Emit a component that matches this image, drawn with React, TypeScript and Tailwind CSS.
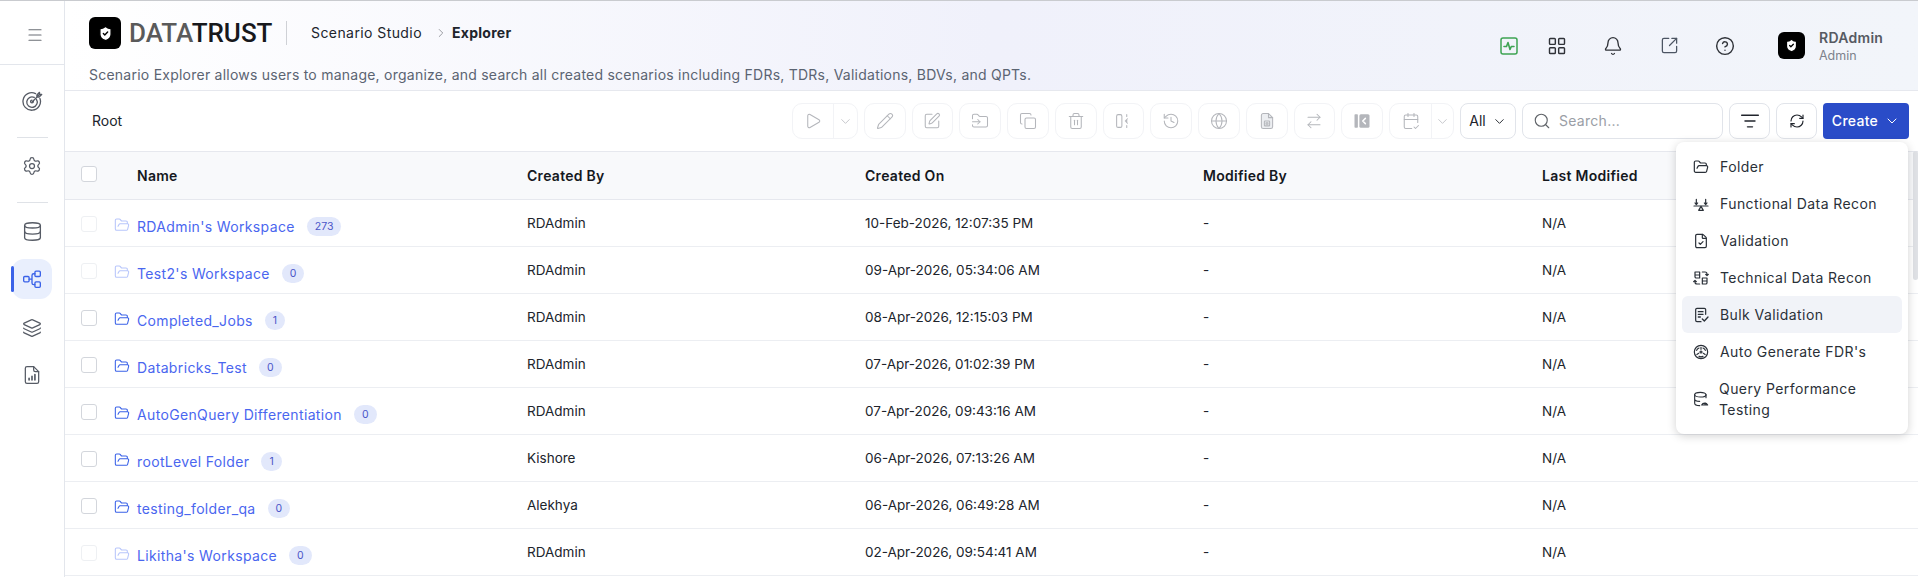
import type { ReactNode } from "react";
import {
  ArrowRightLeft,
  Bell,
  CalendarCheck2,
  ChevronDown,
  ChevronRight,
  CircleHelp,
  Copy,
  Database,
  FileCheck,
  FolderInput,
  FolderOpen,
  Globe,
  History,
  Layers,
  LayoutGrid,
  ListFilter,
  Menu,
  Pencil,
  Play,
  RefreshCw,
  Search,
  Settings,
  ShieldCheck,
  SquarePen,
  SquareArrowOutUpRight,
  Trash2,
} from "lucide-react";

type IconProps = { size?: number; strokeWidth?: number; className?: string };

const Svg = ({ size = 24, strokeWidth = 1.5, className, children }: IconProps & { children: ReactNode }) => (
  <svg
    width={size}
    height={size}
    viewBox="0 0 24 24"
    fill="none"
    stroke="currentColor"
    strokeWidth={strokeWidth}
    strokeLinecap="round"
    strokeLinejoin="round"
    className={className}
  >
    {children}
  </svg>
);

const TargetIcon = (p: IconProps) => (
  <Svg {...p}>
    <path d="M20.5 8.5A10 10 0 1 1 15.5 3" />
    <path d="M16.5 9.5a6 6 0 1 1-2.5-2.2" />
    <path d="M13 12a1.6 1.6 0 1 1-1.6-1.6" />
    <path d="M11.5 12.5 20 4M17 4.5V7h2.5L22.5 4H20V1.5z" />
  </Svg>
);

const TreeIcon = (p: IconProps) => (
  <Svg {...p}>
    <rect x="2" y="9" width="6.5" height="6.5" rx="1.3" />
    <rect x="15.5" y="2.5" width="6.5" height="6.5" rx="1.3" />
    <rect x="15.5" y="15.5" width="6.5" height="6.5" rx="1.3" />
    <path d="M8.5 12.2H12M15.5 5.7h-1.5a2 2 0 0 0-2 2v9a2 2 0 0 0 2 2h1.5" />
  </Svg>
);

const ReportIcon = (p: IconProps) => (
  <Svg {...p}>
    <path d="M14 2H6a2 2 0 0 0-2 2v16a2 2 0 0 0 2 2h12a2 2 0 0 0 2-2V8z" />
    <path d="M14 2v4a2 2 0 0 0 2 2h4" />
    <path d="M8.5 18v-2M12 18v-4.5M15.5 18v-6.5" strokeWidth={2} />
  </Svg>
);

const PulseBox = () => (
  <svg width="18" height="18" viewBox="0 0 18 18" fill="none" stroke="#3ea453" strokeLinejoin="round">
    <rect x="1" y="1" width="16" height="16" rx="2" strokeWidth="1.5" />
    <path d="M4 9.5h2.5L8 5.5l2 7 1.3-3H14" strokeWidth="1.6" strokeLinecap="round" />
  </svg>
);

const SplitIcon = (p: IconProps) => (
  <Svg {...p}>
    <rect x="3.5" y="3.5" width="7" height="17" rx="2" />
    <path d="M17 3.5V6M17 10v4M17 18v2.5M18 9l-3 3 3 3" />
  </Svg>
);

const FileSaveIcon = (p: IconProps) => (
  <Svg {...p}>
    <path d="M14 2H7a2.5 2.5 0 0 0-2.5 2.5v15A2.5 2.5 0 0 0 7 22h10a2.5 2.5 0 0 0 2.5-2.5V7.5z" fill="#eceef1" />
    <path d="M14 2v5.5h5.5" />
    <rect x="8.5" y="12" width="7" height="6.5" rx="1" />
    <rect x="10.7" y="14.2" width="2.6" height="2.2" />
  </Svg>
);

const PanelIcon = ({ size = 24, className }: IconProps) => (
  <svg width={size} height={size} viewBox="0 0 24 24" className={className}>
    <rect x="2" y="3" width="4.5" height="18" rx="1" fill="currentColor" />
    <rect x="8.5" y="3" width="13.5" height="18" rx="2" fill="currentColor" />
    <path d="m16.5 8.5-3.500 3.500 3.500 3.500" fill="none" stroke="white" strokeWidth="2" strokeLinecap="round" strokeLinejoin="round" />
  </svg>
);

const BalanceIcon = (p: IconProps) => (
  <Svg {...p}>
    <path d="M1.5 15h21" />
    <path d="M5 5v8M3 10.5 5 13l2-2.500M19 5v8M17 10.5l2 2.500 2-2.500" />
    <path d="M12 15.5 8.5 21.5h7z" />
  </Svg>
);

const TechIcon = (p: IconProps) => (
  <Svg {...p}>
    <path d="M3 3h7v9H5a2 2 0 0 1-2-2zM3 7.5h7" />
    <path d="M14 12h7v7a2 2 0 0 1-2 2h-5zM14 16.5h7" />
    <path d="M14 3h4a3 3 0 0 1 3 3v2M19 6.5l2 2 2-2M10 21H6a3 3 0 0 1-3-3v-2M5 17.5l-2-2-2 2" />
  </Svg>
);

const BulkIcon = (p: IconProps) => (
  <Svg {...p}>
    <path d="M19 11V4a2 2 0 0 0-2-2H6a2 2 0 0 0-2 2v16a2 2 0 0 0 2 2h6" />
    <path d="M8 7h7M8 11h7M8 15h3" strokeWidth={2} />
    <path d="m14 18 3 3 5.500-6" strokeWidth={2} />
  </Svg>
);

const AutoIcon = (p: IconProps) => (
  <Svg {...p}>
    <circle cx="12" cy="12" r="10" />
    <circle cx="12" cy="12" r="1.5" />
    <path d="M12 8V5M8.500 14l-2.700 1.600M15.500 14l2.700 1.600" />
    <path d="M5.500 9.500a7 7 0 0 1 3.500-3.500M18.500 9.500a7 7 0 0 0-3.500-3.500M9 18.500a7 7 0 0 0 6 0" />
  </Svg>
);

const QueryIcon = (p: IconProps) => (
  <Svg {...p}>
    <ellipse cx="11" cy="5.5" rx="8.500" ry="3.500" />
    <path d="M2.500 5.500v13c0 1.900 3.400 3.500 7.500 3.500M19.500 5.500V10M2.500 12c0 1.900 3.400 3.500 7.500 3.500" />
    <path d="M13 21a5 5 0 0 1 9 0zM17.500 21l1.500-3" />
  </Svg>
);

const rows = [
  { name: "RDAdmin's Workspace", count: 273, by: "RDAdmin", on: "10-Feb-2026, 12:07:35 PM", muted: true },
  { name: "Test2's Workspace", count: 0, by: "RDAdmin", on: "09-Apr-2026, 05:34:06 AM", muted: true },
  { name: "Completed_Jobs", count: 1, by: "RDAdmin", on: "08-Apr-2026, 12:15:03 PM" },
  { name: "Databricks_Test", count: 0, by: "RDAdmin", on: "07-Apr-2026, 01:02:39 PM" },
  { name: "AutoGenQuery Differentiation", count: 0, by: "RDAdmin", on: "07-Apr-2026, 09:43:16 AM" },
  { name: "rootLevel Folder", count: 1, by: "Kishore", on: "06-Apr-2026, 07:13:26 AM" },
  { name: "testing_folder_qa", count: 0, by: "Alekhya", on: "06-Apr-2026, 06:49:28 AM" },
  { name: "Likitha's Workspace", count: 0, by: "RDAdmin", on: "02-Apr-2026, 09:54:41 AM", muted: true },
];

const menuItems = [
  { label: "Folder", Icon: FolderOpen },
  { label: "Functional Data Recon", Icon: BalanceIcon },
  { label: "Validation", Icon: FileCheck },
  { label: "Technical Data Recon", Icon: TechIcon },
  { label: "Bulk Validation", Icon: BulkIcon, active: true },
  { label: "Auto Generate FDR's", Icon: AutoIcon },
];

const toolIcons = [Pencil, SquarePen, FolderInput, Copy, Trash2, SplitIcon, History, Globe, FileSaveIcon, ArrowRightLeft, PanelIcon];

const ShieldLogo = ({ size, icon }: { size: string; icon: number }) => (
  <div className={`flex ${size} shrink-0 items-center justify-center rounded-md bg-black text-white`}>
    <ShieldCheck size={icon} fill="white" stroke="black" strokeWidth={2} />
  </div>
);

export default function App() {
  return (
    <div className="flex h-[577px] w-[1918px] overflow-hidden border-t border-[#c9cbcf] bg-white font-['Inter',sans-serif] text-[13.5px] text-[#20242c]">
      <aside className="flex w-[65px] shrink-0 flex-col items-center border-r border-[#e3e6ec] bg-white text-[#565b65]">
        <div className="flex h-[64px] w-full items-center justify-center border-b border-[#e3e6ec] pl-[5px] pt-[5px] text-[#6b6f76]">
          <Menu size={18} strokeWidth={1.6} />
        </div>
        <div className="flex h-[72px] items-center">
          <TargetIcon size={21} strokeWidth={1.5} />
        </div>
        <div className="h-px w-[31px] bg-[#dfe2e7]" />
        <div className="flex h-[64px] items-center pb-2">
          <Settings size={20} strokeWidth={1.5} />
        </div>
        <div className="h-px w-[31px] bg-[#dfe2e7]" />
        <div className="flex h-[56px] items-center pt-px">
          <Database size={21} strokeWidth={1.5} />
        </div>
        <div className="relative flex h-10 w-10 items-center justify-center rounded-xl bg-[#e9effd] text-[#3a62e8]">
          <span className="absolute left-[-1px] top-[7px] h-[26px] w-[3px] rounded-full bg-[#3a62e8]" />
          <TreeIcon size={20} strokeWidth={1.6} />
        </div>
        <div className="flex h-[54px] items-center pt-1">
          <Layers size={20} strokeWidth={1.5} />
        </div>
        <div className="flex h-[44px] items-center">
          <ReportIcon size={20} strokeWidth={1.5} />
        </div>
      </aside>

      <main className="relative min-w-0 flex-1">
        <header className="flex h-[90px] border-b border-[#e6e8ee] bg-gradient-to-r from-white via-[#f0f1fb] to-[#f2f5fa] pl-6">
          <div className="flex flex-col pt-4">
            <div className="flex items-center">
              <ShieldLogo size="h-8 w-8" icon={17} />
              <span className="ml-2 w-[139px] whitespace-nowrap font-['Roboto',sans-serif] text-[26px] font-medium leading-8">
                <span className="text-[#5a5a5a]">DATA</span>
                <span className="text-[#17181c]">TRUST</span>
              </span>
              <div className="ml-[18px] h-6 w-px bg-[#cfd1d6]" />
              <span className="ml-6 text-sm tracking-[0.03em]">Scenario Studio</span>
              <ChevronRight size={14} strokeWidth={1.5} className="ml-3 text-[#8b8e95]" />
              <span className="ml-1 text-sm font-bold tracking-[0.02em]">Explorer</span>
            </div>
            <p className="mt-4 text-sm tracking-[0.017em] text-[#5b6472]">
              Scenario Explorer allows users to manage, organize, and search all created scenarios including FDRs, TDRs, Validations, BDVs, and QPTs.
            </p>
          </div>
          <div className="ml-auto flex items-center pr-4 text-[#2f3238]">
            <div className="flex w-5 justify-center"><PulseBox /></div>
            <div className="ml-7 flex w-5 justify-center"><LayoutGrid size={20} strokeWidth={1.7} /></div>
            <div className="ml-9 flex w-5 justify-center"><Bell size={20} strokeWidth={1.6} /></div>
            <div className="ml-9 flex w-5 justify-center"><SquareArrowOutUpRight size={19} strokeWidth={1.6} className="text-[#4c5563]" /></div>
            <div className="ml-9 flex w-5 justify-center"><CircleHelp size={20} strokeWidth={1.7} /></div>
            <div className="ml-[43px]"><ShieldLogo size="h-[27px] w-[27px]" icon={15} /></div>
            <div className="ml-[14px] w-[83px] leading-[15px]">
              <div className="text-sm font-semibold tracking-[0.02em] text-[#565a62]">RDAdmin</div>
              <div className="text-[12.5px] text-[#7d828c]">Admin</div>
            </div>
          </div>
        </header>

        <div className="flex h-[60px] items-center pl-[27px] pr-[9px]">
          <span className="text-sm">Root</span>
          <div className="ml-auto flex items-center gap-[6px]">
            <div className="flex h-9 items-center rounded-[10px] border border-[#f2f3f6] text-[#b4b6bb]">
              <div className="flex h-full w-[41px] items-center justify-center border-r border-[#f2f3f6]"><Play size={18} strokeWidth={1.4} /></div>
              <div className="flex w-[23px] justify-center"><ChevronDown size={15} strokeWidth={1.2} /></div>
            </div>
            {toolIcons.map((Icon, i) => (
              <button key={i} className="flex h-9 w-[41.75px] items-center justify-center rounded-[10px] border border-[#f2f3f6] text-[#b4b6bb]">
                <Icon size={18} strokeWidth={1.4} />
              </button>
            ))}
            <div className="flex h-9 items-center rounded-[10px] border border-[#f2f3f6] text-[#b4b6bb]">
              <div className="flex h-full w-[42px] items-center justify-center border-r border-[#f2f3f6]"><CalendarCheck2 size={18} strokeWidth={1.4} /></div>
              <div className="flex w-[21px] justify-center"><ChevronDown size={15} strokeWidth={1.2} /></div>
            </div>
            <button className="flex h-9 w-[56px] items-center justify-center gap-1.5 rounded-lg border border-[#e1e4ea] text-sm">
              All <ChevronDown size={15} strokeWidth={1.5} />
            </button>
            <div className="flex h-9 w-[201px] items-center gap-2 rounded-lg border border-[#e1e4ea] px-2.5 text-sm tracking-[0.02em] text-[#9a9ea6]">
              <Search size={18} strokeWidth={1.5} className="text-[#5f6368]" />
              Search...
            </div>
            <button className="flex h-9 w-[41px] items-center justify-center rounded-lg border border-[#e1e4ea]">
              <ListFilter size={20} strokeWidth={1.7} />
            </button>
            <button className="flex h-9 w-[41px] items-center justify-center rounded-lg border border-[#e1e4ea]">
              <RefreshCw size={16} strokeWidth={1.7} />
            </button>
            <button className="flex h-9 w-[86px] items-center justify-center gap-1.5 rounded-[4px] bg-[#2a4cc8] text-sm font-medium tracking-[0.02em] text-white">
              Create <ChevronDown size={16} strokeWidth={1.5} />
            </button>
          </div>
        </div>

        <div className="flex h-[49px] items-center border-y border-[#e6e8ee] bg-[#f8f9fb] text-sm font-semibold tracking-[0.02em] text-[#15181e]">
          <div className="mb-1 ml-4 h-4 w-4 rounded-[3px] border border-[#d3d6dc] bg-white" />
          <div className="ml-10 w-[390px]">Name</div>
          <div className="w-[338px]">Created By</div>
          <div className="w-[338px]">Created On</div>
          <div className="w-[339px]">Modified By</div>
          <div>Last Modified</div>
        </div>

        {rows.map((r) => (
          <div key={r.name} className="flex h-[47px] items-center border-b border-[#eceef2] pt-px">
            <div className={`ml-4 h-4 w-4 rounded-[3px] border ${r.muted ? "border-[#eef0f3]" : "border-[#d3d6dc]"}`} />
            <FolderOpen size={16} strokeWidth={1.6} className={`ml-[17px] mt-0.5 ${r.muted ? "text-[#b8c6fb]" : "text-[#3a62e8]"}`} />
            <div className="ml-[7px] flex w-[390px] items-center gap-3 pt-[6px]">
              <span className="text-sm tracking-[0.025em] text-[#4a66ef]">{r.name}</span>
              <span className="rounded-full bg-[#e2e8fb] px-2 py-0.5 text-[10.5px] leading-[15px] text-[#4a55c8]">{r.count}</span>
            </div>
            <div className="w-[338px]">{r.by}</div>
            <div className="w-[338px]">{r.on}</div>
            <div className="w-[339px]">-</div>
            <div>N/A</div>
          </div>
        ))}

        <div className="absolute right-0 top-[150px] h-[129px] w-[5px] rounded-full bg-[#dfe1e5]" />

        <div className="absolute right-[10px] top-[141px] w-[232px] rounded-lg bg-white px-[6px] pb-[10px] pt-[6px] text-sm tracking-[0.03em] text-[#2a3038] shadow-[0_2px_10px_rgba(0,0,0,0.18)]">
          {menuItems.map(({ label, Icon, active }) => (
            <div key={label} className={`flex h-[37px] items-center gap-[11px] rounded-md pl-[11px] ${active ? "bg-[#f1f3f8]" : ""}`}>
              <Icon size={16} strokeWidth={1.8} />
              {label}
            </div>
          ))}
          <div className="flex items-center gap-[10px] pb-1 pl-[11px] pt-[8px] leading-[21px]">
            <QueryIcon size={16} strokeWidth={1.7} className="shrink-0" />
            <span className="w-[170px]">Query Performance Testing</span>
          </div>
        </div>
      </main>
    </div>
  );
}
